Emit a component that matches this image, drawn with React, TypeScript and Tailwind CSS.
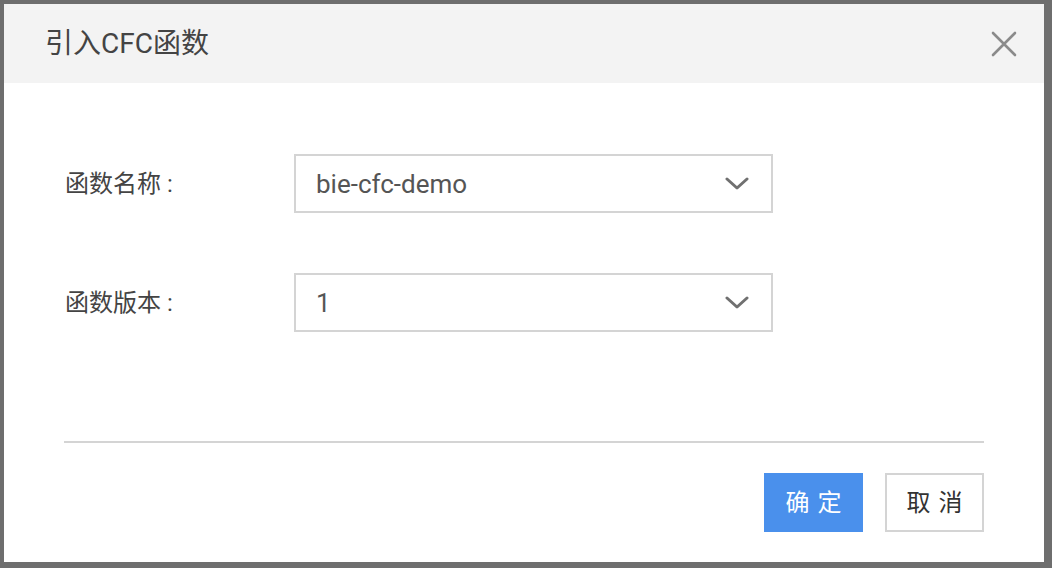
import { useState } from "react";

const FONT = '"Roboto", "Noto Sans CJK SC", "Noto Sans", sans-serif';

function Chevron() {
  return (
    <svg width="24" height="14" viewBox="0 0 24 14" fill="none" aria-hidden="true">
      <path d="M2 2 L12 11 L22 2" stroke="#707070" strokeWidth="3" strokeLinecap="round" strokeLinejoin="round" />
    </svg>
  );
}

function CloseIcon() {
  return (
    <svg width="26" height="26" viewBox="0 0 26 26" fill="none" aria-hidden="true">
      <path d="M2 2 L24 24 M24 2 L2 24" stroke="#8a8a8a" strokeWidth="2.6" strokeLinecap="round" />
    </svg>
  );
}

function Field({ label, value }: { label: string; value: string }) {
  return (
    <div className="flex items-center">
      <div className="w-[231px] pl-[2px] text-[24px] text-[#444] leading-none">{label}</div>
      <button
        type="button"
        className="flex items-center justify-between w-[479px] h-[59px] border-2 border-[#d4d4d4] bg-white pl-[20px] pr-[22px] text-left"
      >
        <span className="text-[26px] text-[#555] leading-none">{value}</span>
        <Chevron />
      </button>
    </div>
  );
}

export default function App() {
  const [open] = useState(true);

  return (
    <div
      className="w-[1052px] h-[568px] bg-[#6e6e6e] pt-[4px] pl-[4px] overflow-hidden"
      style={{ fontFamily: FONT }}
    >
      {open && (
        <div className="w-[1040px] h-[558px] bg-white flex flex-col">
          <div className="h-[79px] bg-[#f3f3f3] flex items-center justify-between pl-[41px] pr-[27px]">
            <h2 className="text-[28px] text-[#444] leading-none font-normal">引入CFC函数</h2>
            <button type="button" className="p-0">
              <CloseIcon />
            </button>
          </div>

          <div className="flex flex-col gap-[60px] pt-[71px] pl-[59px]">
            <Field label="函数名称 :" value="bie-cfc-demo" />
            <Field label="函数版本 :" value="1" />
          </div>

          <div className="mx-[60px] mt-[109px] h-[2px] bg-[#d4d4d4]" />

          <div className="flex justify-end gap-[22px] pt-[30px] pr-[60px]">
            <button
              type="button"
              className="w-[99px] h-[59px] bg-[#4a90ec] text-white text-[24px] tracking-[8px] pl-[8px] leading-none"
            >
              确定
            </button>
            <button
              type="button"
              className="w-[99px] h-[59px] bg-white border-2 border-[#d4d4d4] text-[#333] text-[24px] tracking-[8px] pl-[8px] leading-none"
            >
              取消
            </button>
          </div>
        </div>
      )}
    </div>
  );
}
